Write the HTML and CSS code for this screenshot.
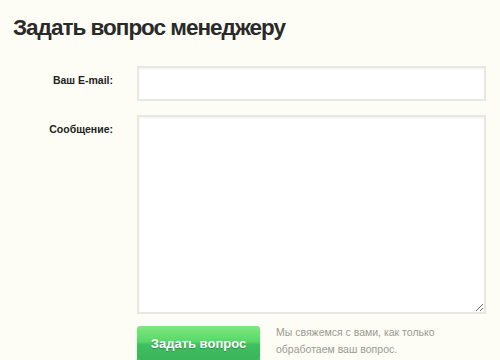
FILE: index.html
```html
<!DOCTYPE html>
<html lang="ru">
<head>
<meta charset="UTF-8">
<title>Задать вопрос менеджеру</title>
<link rel="stylesheet" href="styles.css">
</head>
<body>

<main class="ask">
  <h1 class="ask-title">Задать вопрос менеджеру</h1>

  <form class="ask-form">
    <div class="row">
      <label class="row-label" for="email">Ваш E-mail:</label>
      <input class="field" id="email" type="email">
    </div>

    <div class="row">
      <label class="row-label" for="msg">Сообщение:</label>
      <textarea class="field field--area" id="msg"></textarea>
    </div>

    <div class="row row--submit">
      <span class="row-label"></span>
      <button class="btn" type="button">Задать вопрос</button>
      <p class="note">Мы свяжемся с вами, как только обработаем ваш вопрос.</p>
    </div>
  </form>
</main>

</body>
</html>
```

FILE: styles.css
```css
* { margin: 0; padding: 0; box-sizing: border-box; }
body {
  background: #fdfdf5;
  color: #2b2b2b;
  font-family: "Liberation Sans", Arial, sans-serif;
}

.ask { padding: 14px 14px 0 13px; }

.ask-title {
  font-size: 22.5px;
  font-weight: 700;
  letter-spacing: -1px;
  line-height: 28px;
  color: #2a2a2a;
  margin-bottom: 24px;
}

/* ---------- форма ---------- */
.ask-form { display: flex; flex-direction: column; gap: 14px; }
.row { display: flex; align-items: flex-start; }
.row-label {
  width: 100px;
  flex: none;
  margin-right: 24px;
  text-align: right;
  font-size: 10.5px;
  font-weight: 700;
  color: #222;
  padding-top: 8px;
}
.field {
  width: 349px;
  height: 35px;
  background: #fff;
  border: 2px solid #e6e8e6;
  box-shadow: inset 0 1px 2px rgba(0,0,0,0.06);
  font-family: inherit;
  font-size: 13px;
  padding: 6px 8px;
  outline: none;
}
.field--area { height: 199px; resize: vertical; }

.row--submit { margin-top: -2px; }
.btn {
  width: 123px;
  height: 34px;
  border: none;
  border-radius: 3px;
  background: linear-gradient(#7ee87f 0%, #5ad86a 45%, #3fbf5f 55%, #3bb45c 100%);
  box-shadow: 0 2px 0 #2f8f46, 0 3px 3px rgba(0,0,0,0.15);
  color: #fff;
  font-family: inherit;
  font-size: 13px;
  font-weight: 700;
  text-shadow: 0 1px 1px rgba(0,0,0,0.25);
  flex: none;
}
.note {
  margin-left: 16px;
  margin-top: -2px;
  width: 190px;
  font-size: 10.5px;
  line-height: 17px;
  color: #9a9a94;
}
```
